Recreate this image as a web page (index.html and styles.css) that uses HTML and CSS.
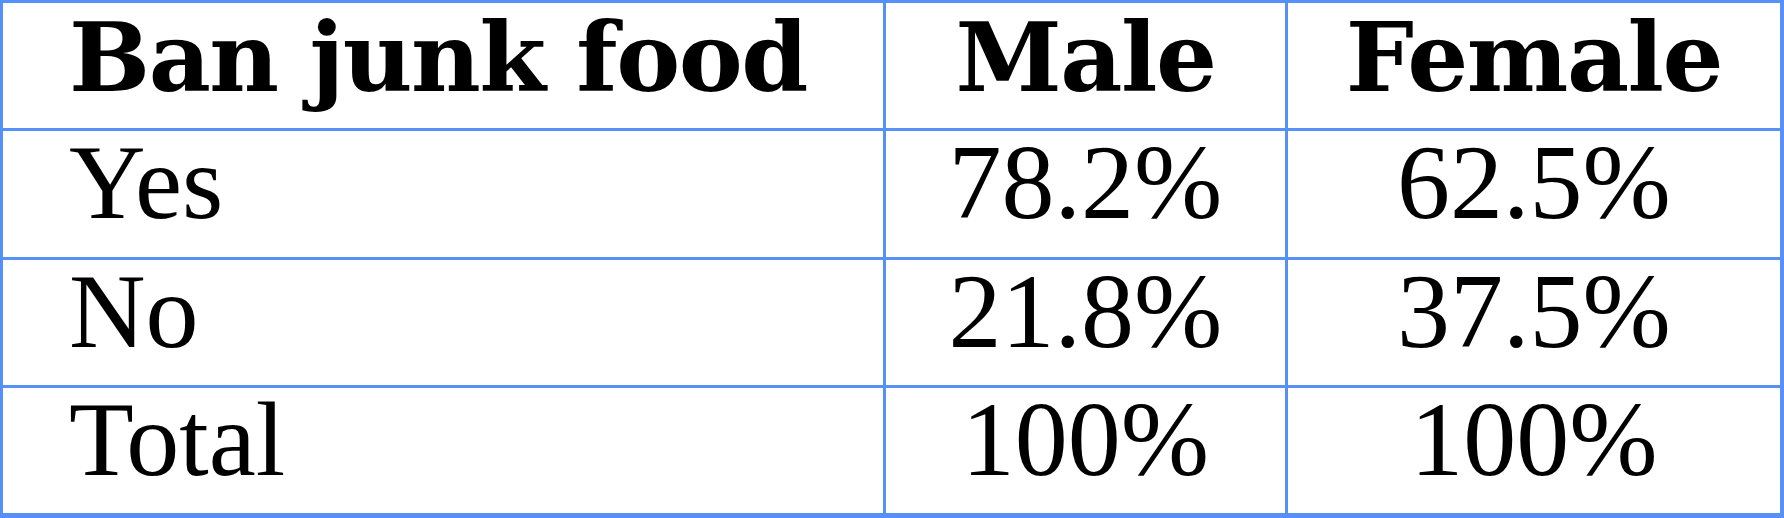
FILE: index.html
```html
<!DOCTYPE html>
<html lang="en">

<head>
    <meta charset="UTF-8" />
    <title>Ban junk food</title>
    <link rel="stylesheet" href="styles.css">
</head>

<body>
    <div class="tabela">
        <div class="cell head label">Ban junk food</div>
        <div class="cell head">Male</div>
        <div class="cell head">Female</div>

        <div class="cell label">Yes</div>
        <div class="cell">78.2%</div>
        <div class="cell">62.5%</div>

        <div class="cell label">No</div>
        <div class="cell">21.8%</div>
        <div class="cell">37.5%</div>

        <div class="cell label">Total</div>
        <div class="cell">100%</div>
        <div class="cell">100%</div>
    </div>
</body>

</html>
```

FILE: styles.css
```css
body {
    margin: 0;
    background: #fff;
}

/* Tabela: o fundo azul aparece nos gaps e faz as linhas */
.tabela {
    display: grid;
    grid-template-columns: 880px 399px 492px;
    grid-template-rows: 125px 126px 125px 125px;
    gap: 3px;
    padding: 3px 4px 4px 3px;
    width: 1784px;
    height: 518px;
    box-sizing: border-box;
    background: #5591f7;
}

.cell {
    background: #fff;
    color: #000;
    font-family: "Liberation Serif", serif;
    font-size: 106px;
    line-height: 100px;
    padding-top: 2px;
    text-align: center;
    white-space: nowrap;
}

.cell.label {
    text-align: left;
    padding-left: 66px;
}

/* Cabeçalho em negrito */
.cell.head {
    font-family: "DejaVu Serif", serif;
    font-weight: bold;
    font-size: 96px;
    letter-spacing: -1.5px;
    padding-top: 5px;
}
```
